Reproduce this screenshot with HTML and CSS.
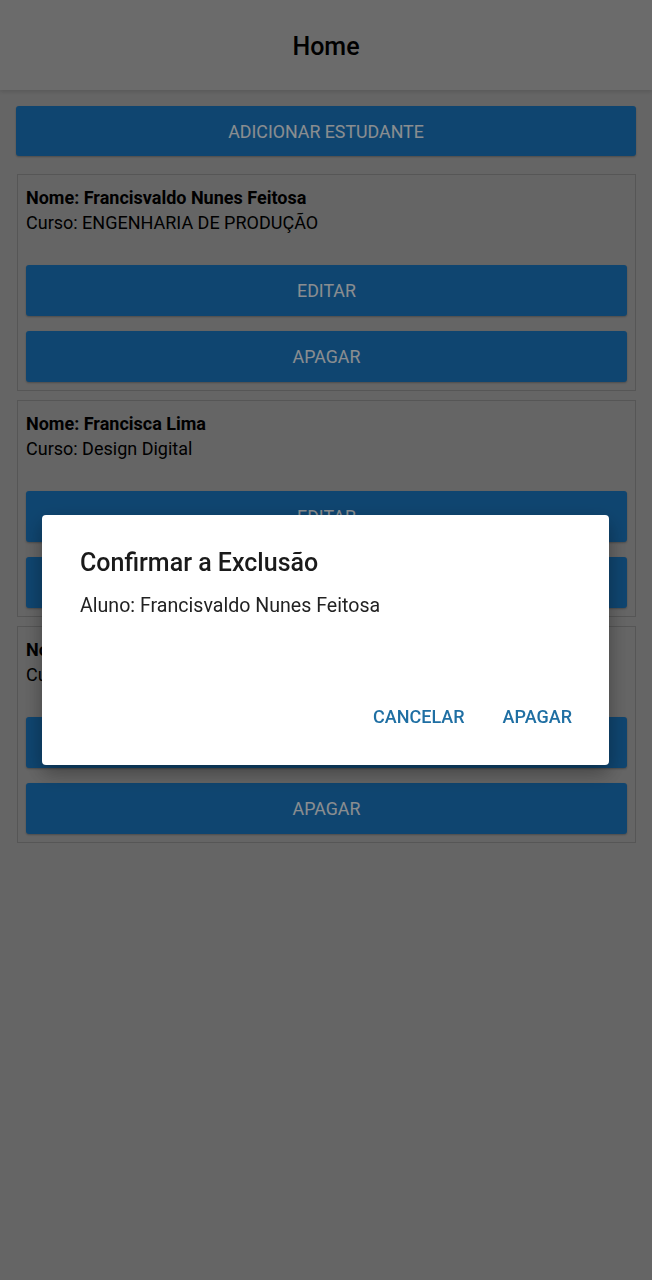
FILE: index.html
```html
<!DOCTYPE html>
<html lang="pt">
<head>
<meta charset="utf-8">
<title>Home</title>
<link rel="stylesheet" href="styles.css">
</head>
<body>
<div class="app">
  <header class="appbar"><h1 class="appbar-title">Home</h1></header>
  <main class="content">
    <button class="btn btn-add">ADICIONAR ESTUDANTE</button>
    <section class="card">
      <div class="card-info">
        <p class="name">Nome: Francisvaldo Nunes Feitosa</p>
        <p class="course">Curso: ENGENHARIA DE PRODUÇÃO</p>
      </div>
      <div class="card-actions">
        <button class="btn">EDITAR</button>
        <button class="btn">APAGAR</button>
      </div>
    </section>
    <section class="card">
      <div class="card-info">
        <p class="name">Nome: Francisca Lima</p>
        <p class="course">Curso: Design Digital</p>
      </div>
      <div class="card-actions">
        <button class="btn">EDITAR</button>
        <button class="btn">APAGAR</button>
      </div>
    </section>
    <section class="card">
      <div class="card-info">
        <p class="name">Nome: Pedro Henrique</p>
        <p class="course">Curso: Ciência da Computação</p>
      </div>
      <div class="card-actions">
        <button class="btn">EDITAR</button>
        <button class="btn">APAGAR</button>
      </div>
    </section>
  </main>
</div>
<div class="scrim">
  <div class="dialog" role="dialog">
    <h2 class="dialog-title">Confirmar a Exclusão</h2>
    <p class="dialog-body">Aluno: Francisvaldo Nunes Feitosa</p>
    <div class="dialog-actions">
      <button class="text-btn">CANCELAR</button>
      <button class="text-btn">APAGAR</button>
    </div>
  </div>
</div>
</body>
</html>
```
FILE: styles.css
```css
* { box-sizing: border-box; }
html, body { margin: 0; padding: 0; }
body {
  font-family: Roboto, "Noto Sans", "Liberation Sans", sans-serif;
  background: #a9a9a9;
  min-height: 1280px;
  color: #000;
}
.app { min-height: 1280px; }
.appbar {
  height: 90px;
  background: #b2b2b2;
  display: flex;
  align-items: center;
  justify-content: center;
  box-shadow: 0 2px 4px rgba(0,0,0,0.12);
}
.appbar-title {
  margin: 0;
  font-size: 25px;
  font-weight: 500;
  color: #000;
  padding-top: 2px;
}
.content {
  padding: 16px 16px;
  display: flex;
  flex-direction: column;
  gap: 9px;
}
.btn {
  display: block;
  width: 100%;
  height: 51px;
  border: none;
  border-radius: 3px;
  background: #1a74bb;
  color: #e6ecf0;
  font-family: inherit;
  font-size: 17.8px;
  box-shadow: 0 1px 2px rgba(0,0,0,0.25);
  padding: 0;
}
.btn-add { height: 50px; margin-bottom: 9px; }
.card {
  border: 1px solid #8f8f8f;
  padding: 9px 8px 8px 8px;
  margin-left: 1px;
}
.card-info { height: 81px; }
.name, .course { margin: 0; font-size: 18px; line-height: 25px; }
.name { font-weight: 700; padding-top: 1px; }
.card-actions { display: flex; flex-direction: column; gap: 15px; }
.scrim {
  position: fixed;
  inset: 0;
  background: rgba(0,0,0,0.4);
}
.dialog {
  position: absolute;
  left: 42px;
  top: 515px;
  width: 567px;
  height: 250px;
  background: #fff;
  border-radius: 4px;
  box-shadow: 0 8px 20px rgba(0,0,0,0.35);
  padding: 32px 38px 0 38px;
  display: flex;
  flex-direction: column;
}
.dialog-title {
  margin: 0;
  font-size: 25px;
  font-weight: 500;
  color: #1a1a1a;
  line-height: 32px;
}
.dialog-body {
  margin: 14px 0 0 0;
  font-size: 19.6px;
  color: #222;
  line-height: 26px;
}
.dialog-actions {
  margin-top: auto;
  margin-bottom: 36px;
  display: flex;
  justify-content: flex-end;
  gap: 38px;
  margin-right: -1px;
}
.text-btn {
  border: none;
  background: none;
  padding: 0;
  font-family: inherit;
  font-size: 18px;
  font-weight: 500;
  color: #1f6fa3;
  line-height: 24px;
}
```
